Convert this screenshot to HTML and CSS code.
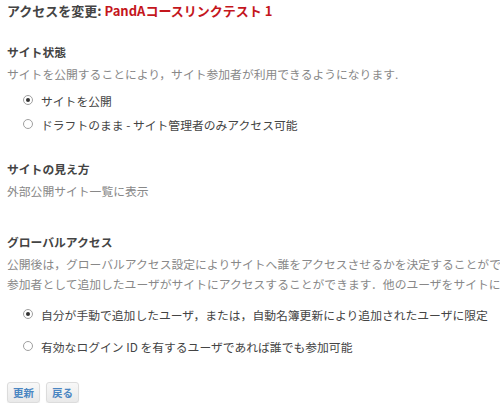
FILE: index.html
```html
<!DOCTYPE html>
<html lang="ja">
<head>
<meta charset="utf-8">
<title>アクセスを変更</title>
<link rel="stylesheet" href="styles.css">
</head>
<body>
<div class="page">
  <h2 class="title">アクセスを変更: <span class="site-name">PandAコースリンクテスト 1</span></h2>

  <section class="sec sec-status">
    <h3 class="sec-head">サイト状態</h3>
    <p class="desc">サイトを公開することにより，サイト参加者が利用できるようになります.</p>
    <div class="radios radios-tight">
      <label class="opt"><input type="radio" name="pub" checked><span>サイトを公開</span></label>
      <label class="opt"><input type="radio" name="pub"><span>ドラフトのまま - サイト管理者のみアクセス可能</span></label>
    </div>
  </section>

  <section class="sec sec-view">
    <h3 class="sec-head">サイトの見え方</h3>
    <p class="desc">外部公開サイト一覧に表示</p>
  </section>

  <section class="sec sec-global">
    <h3 class="sec-head">グローバルアクセス</h3>
    <p class="desc">公開後は，グローバルアクセス設定によりサイトへ誰をアクセスさせるかを決定することができます．</p>
    <p class="desc desc-next">参加者として追加したユーザがサイトにアクセスすることができます．他のユーザをサイトに追加することもできます．</p>
    <div class="radios radios-loose">
      <label class="opt"><input type="radio" name="glob" checked><span>自分が手動で追加したユーザ，または，自動名簿更新により追加されたユーザに限定</span></label>
      <label class="opt"><input type="radio" name="glob"><span>有効なログイン ID を有するユーザであれば誰でも参加可能</span></label>
    </div>
  </section>

  <div class="actions">
    <button class="btn" type="button">更新</button>
    <button class="btn" type="button">戻る</button>
  </div>
</div>
</body>
</html>
```

FILE: styles.css
```css
html, body {
  margin: 0;
  padding: 0;
  background: #ffffff;
  overflow: hidden;
}

body {
  font-family: "Noto Sans CJK JP", "Noto Sans", "Liberation Sans", sans-serif;
  font-size: 11.8px;
  color: #555;
}

.page {
  padding: 1px 7px 0 7px;
  width: 700px;
}

.title {
  margin: 0;
  font-size: 13px;
  line-height: 20px;
  font-weight: bold;
  color: #444;
  white-space: nowrap;
}

.site-name {
  color: #c4161c;
}

.sec-head {
  margin: 0;
  font-size: 11.8px;
  line-height: 20px;
  font-weight: bold;
  color: #444;
}

.sec-status .sec-head { margin-top: 21px; }
.sec-view .sec-head { margin-top: 23px; }
.sec-global .sec-head { margin-top: 31px; }

.desc {
  margin: 2px 0 0 0;
  line-height: 20px;
  color: #888;
  white-space: nowrap;
}

.desc-next { margin-top: 0; }

.radios {
  display: flex;
  flex-direction: column;
  margin-top: 4px;
  padding-left: 16px;
}

.opt {
  display: flex;
  align-items: center;
  gap: 8px;
  color: #444;
  white-space: nowrap;
}

.radios-tight .opt { height: 24px; }
.radios-loose .opt { height: 32px; }

.opt input {
  appearance: none;
  -webkit-appearance: none;
  margin: 0;
  width: 10px;
  height: 10px;
  border: 1px solid #a0a0a0;
  border-radius: 50%;
  background: #fff;
  display: grid;
  place-items: center;
  box-sizing: border-box;
  flex: none;
}

.opt input:checked::after {
  content: "";
  width: 4px;
  height: 4px;
  border-radius: 50%;
  background: #333;
}

.actions {
  display: flex;
  gap: 6px;
  margin-top: 20px;
  padding-left: 0;
}

.btn {
  font-family: inherit;
  font-size: 10.5px;
  font-weight: bold;
  color: #4a86c2;
  height: 21px;
  line-height: 19px;
  padding: 0 5px;
  border: 1px solid #dcdcdc;
  border-radius: 3px;
  background: linear-gradient(#f8f8f8, #e9e9e9);
  box-shadow: 0 1px 1px rgba(0, 0, 0, 0.08);
}
```
